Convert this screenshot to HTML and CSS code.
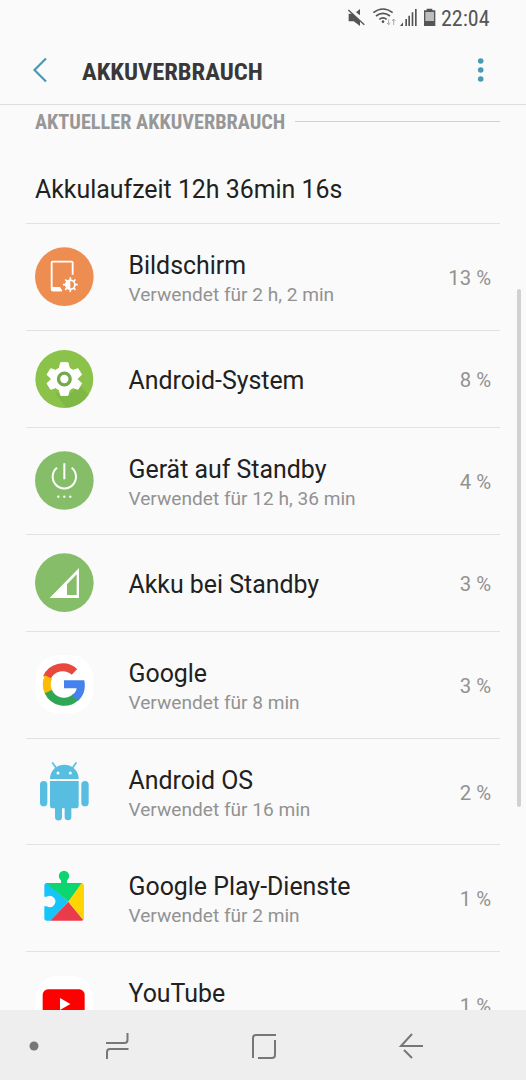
FILE: index.html
```html
<!DOCTYPE html>
<html lang="de">
<head>
<meta charset="utf-8">
<title>Akkuverbrauch</title>
<link rel="stylesheet" href="styles.css">
</head>
<body>
<div class="screen">
  <header class="status">
    <svg class="status-icons" width="104" height="28" viewBox="0 0 312 84">
      <g fill="#555"><path d="M14 41h12l22 22v15L29 64H14zM48 27v19L36 37z"/><path d="M13 30l48 44" stroke="#555" stroke-width="4"/></g>
      <g fill="none" stroke="#555" stroke-width="5"><path d="M88 38q29-22 58 0M96 48q21-16 42 0M106 58q11-9 22 0"/></g>
      <circle cx="117" cy="65" r="4" fill="#555"/>
      <path d="M134 58v16m-5-5l5 5 5-5M149 75V57m-5 6l5-6 5 6" fill="none" stroke="#aaa" stroke-width="3"/>
      <path d="M168 78l9-11v11zM184 57h5v21h-5zM193 47h5v31h-5zM203 37h5v41h-5zM213 27h5v51h-5z" fill="#555"/>
      <path d="M240 31h8v-5h17v5h9v47h-34z" fill="#555"/><path d="M244 36h26v27h-26z" fill="#bdbdbd"/>
    </svg>
    <span class="clock">22:04</span>
  </header>
  <div class="toolbar">
    <svg class="back" width="16" height="26" viewBox="0 0 16 26"><path d="M14 1.500L2.500 13 14 24.500" fill="none" stroke="#4b9ab5" stroke-width="2.200"/></svg>
    <h1 class="title">AKKUVERBRAUCH</h1>
    <svg class="more" width="8" height="26" viewBox="0 0 8 26" fill="#4b9ab5"><circle cx="3.700" cy="4" r="2.800"/><circle cx="3.700" cy="13" r="2.800"/><circle cx="3.700" cy="22" r="2.800"/></svg>
  </div>
  <main class="content">
    <div class="section"><h2 class="section-title">AKTUELLER AKKUVERBRAUCH</h2><i class="rule"></i></div>
    <div class="summary"><span class="name">Akkulaufzeit 12h 36min 16s</span></div>
    <ul class="list">
      <li class="row">
        <svg class="icon" viewBox="0 3 240 240"><circle cx="121" cy="122" r="88" fill="#ee8d51"/><path d="M146 116V80q0-3-3-3H86q-3 0-3 3v80q0 3 3 3h28" fill="none" stroke="#fff" stroke-width="5.500"/><path d="M83 153h25l7 13H83z" fill="#fff"/><g stroke="#fff" stroke-width="5"><path d="M139 124v44M117 146h44M123.500 130.500l31 31M123.500 161.500l31-31"/></g><circle cx="139" cy="146" r="16" fill="#fff"/><path d="M139 135a11 11 0 0 1 0 22z" fill="#ee8d51"/></svg>
        <div class="text"><span class="name">Bildschirm</span><span class="sub">Verwendet für 2 h, 2 min</span></div><span class="pct">13 %</span>
      </li>
      <li class="row single">
        <svg class="icon" viewBox="0 -3 240 240"><circle cx="121" cy="117" r="87" fill="#8bc34a"/><path d="M93 158l33 45a87 87 0 0 0 68-39l-30-31-20 25z" fill="#76ad42" opacity=".5"/><path d="M110 68h22l4 16 11 7 15-5 11 18-12 11v4l12 11-11 18-15-5-11 7-4 16h-22l-4-16-11-7-15 5-11-18 12-11v-4l-12-11 11-18 15 5 11-7z" fill="#fff" stroke="#fff" stroke-width="3" stroke-linejoin="round"/><circle cx="121" cy="117" r="17.500" fill="#fff" stroke="#75a84b" stroke-width="10"/></svg>
        <div class="text"><span class="name">Android-System</span></div><span class="pct">8 %</span>
      </li>
      <li class="row">
        <svg class="icon" viewBox="0 3 240 240"><circle cx="121" cy="121.500" r="88" fill="#86bd69"/><path d="M121 70v48M99 83a35 35 0 1 0 44 0" fill="none" stroke="#fff" stroke-width="6"/><g fill="#fff"><circle cx="103" cy="170" r="3.500"/><circle cx="121" cy="170" r="3.500"/><circle cx="139" cy="170" r="3.500"/></g></svg>
        <div class="text"><span class="name">Gerät auf Standby</span><span class="sub">Verwendet für 12 h, 36 min</span></div><span class="pct">4 %</span>
      </li>
      <li class="row single">
        <svg class="icon" viewBox="0 -3 240 240"><circle cx="121" cy="116" r="88" fill="#86bd69"/><path d="M165 72v90H77zM158 91l-29 30v32h29z" fill="#fff" fill-rule="evenodd"/></svg>
        <div class="text"><span class="name">Akku bei Standby</span></div><span class="pct">3 %</span>
      </li>
      <li class="row">
        <svg class="icon" viewBox="0 3 240 240"><rect x="34" y="34" width="174" height="174" rx="68" fill="#fff"/><g fill="none" stroke-width="24"><path d="M68.500 101a52 52 0 0 1 83-17.500" stroke="#e8483d"/><path d="M73.500 144a52 52 0 0 1 0-45" stroke="#fbbc05"/><path d="M155 160a52 52 0 0 1-82-17" stroke="#2fa653"/></g><path d="M120 109h61c5 27-3 48-18 61l-20-16c9-6 13-11 15-21h-38z" fill="#4682ed"/></svg>
        <div class="text"><span class="name">Google</span><span class="sub">Verwendet für 8 min</span></div><span class="pct">3 %</span>
      </li>
      <li class="row short">
        <svg class="icon" viewBox="0 5 240 240" fill="#58bee1"><path d="M78 86a43 43 0 0 1 86 0zM78 92h86v75q0 7-7 7h-15v26a10 10 0 0 1-20 0v-26h-8v26a10 10 0 0 1-21 0v-26h-8q-7 0-7-7z"/><rect x="48" y="92" width="22" height="76" rx="11"/><rect x="172" y="92" width="22" height="76" rx="11"/><path d="M95 51l-9-13M147 51l9-13" stroke="#58bee1" stroke-width="5" stroke-linecap="round"/><circle cx="102" cy="68" r="4.500" fill="#fff"/><circle cx="139" cy="68" r="4.500" fill="#fff"/></svg>
        <div class="text"><span class="name">Android OS</span><span class="sub">Verwendet für 16 min</span></div><span class="pct">2 %</span>
      </li>
      <li class="row">
        <svg class="icon" viewBox="0 -6 240 240"><circle cx="120" cy="48" r="15.500" fill="#0bd66f"/><path d="M111 52h18v18h-18z" fill="#0bd66f"/><path d="M78 182l55-57 45 55q-2 2-6 2z" fill="#ea3b4b"/><path d="M69 69l64 56-54 57H69q-8 0-8-8v-35h7a17 17 0 1 0 0-29h-7V77q0-8 8-8z" fill="#16c4f7"/><path d="M66 69h109l-42 56z" fill="#0bd66f"/><path d="M173 69l-40 56 45 55q2-2 2-6V77q0-7-7-8z" fill="#ffd400"/></svg>
        <div class="text"><span class="name">Google Play-Dienste</span><span class="sub">Verwendet für 2 min</span></div><span class="pct">1 %</span>
      </li>
      <li class="row">
        <svg class="icon" viewBox="0 -15 240 240"><rect x="34" y="17" width="174" height="174" rx="68" fill="#fff"/><rect x="56" y="58" width="126" height="88" rx="16" fill="#f00"/><path d="M108 84l31 18-31 18z" fill="#fff"/></svg>
        <div class="text partial"><span class="name">YouTube</span></div><span class="pct">1 %</span>
      </li>
    </ul>
  </main>
  <nav class="nav">
    <svg width="526" height="70" viewBox="0 0 526 70" fill="none" stroke="#777" stroke-width="2">
      <circle cx="34" cy="36" r="4.500" fill="#777" stroke="none"/>
      <path d="M106 33h18.500q3 0 3-3v-7M128.500 39H110q-3 0-3 3v7"/>
      <path d="M253 48V28q0-3 3-3h20M275 30v15q0 3-3 3h-14"/>
      <path d="M423 36h-22l11-12M404 40l8 8"/>
    </svg>
  </nav>
  <i class="scrollbar"></i>
</div>
</body>
</html>
```
FILE: styles.css
```css
* { box-sizing: border-box; margin: 0; padding: 0; }
body { background: #fafafa; font-family: Roboto, sans-serif; color: #212121; }
.screen { position: relative; width: 526px; height: 1080px; display: flex; flex-direction: column; overflow: hidden; }
.status { height: 36px; flex: none; display: flex; padding-left: 344px; }
.status-icons { flex: none; }
.clock { margin-left: -7px; font-family: "Roboto Condensed", Roboto, sans-serif; font-stretch: 75%; font-size: 22px; line-height: 37px; color: #555; }
.toolbar { height: 69px; flex: none; display: flex; align-items: center; padding: 0 41px 0 32px; border-bottom: 1px solid #dedede; }
.title { flex: 1; margin-left: 34px; padding-top: 3px; font: 700 24.6px/30px "Roboto Condensed", Roboto, sans-serif; font-stretch: 75%; color: #383838; white-space: nowrap; }
.content { flex: 1; min-height: 0; overflow: hidden; padding: 0 26px; }
.section { display: flex; align-items: center; height: 34px; padding-left: 9px; }
.section-title { font: 700 20.3px/24px "Roboto Condensed", Roboto, sans-serif; font-stretch: 75%; color: #979797; white-space: nowrap; }
.rule { flex: 1; height: 1px; background: #d2d2d2; margin: 0 0 2px 10px; }
.summary { height: 85px; padding: 35px 9px 0; border-bottom: 1px solid #e2e2e2; }
.name { display: block; font-size: 24.9px; line-height: 32px; white-space: nowrap; }
.list { list-style: none; }
.row { height: 107px; display: flex; align-items: center; border-bottom: 1px solid #e2e2e2; padding-right: 9px; }
.single { height: 97px; }
.short { height: 106px; }
.icon { width: 80px; height: 80px; flex: none; margin-left: -2px; }
.text { flex: 1; margin-left: 24.5px; padding-top: 4px; }
.partial { padding-bottom: 26px; }
.sub { display: block; font-size: 19.1px; line-height: 26px; color: #929292; white-space: nowrap; }
.pct { padding-top: 2px; font-size: 20.3px; color: #929292; }
.nav { height: 70px; flex: none; background: #eee; }
.nav svg { display: block; }
.scrollbar { position: absolute; right: 5px; top: 289px; width: 4px; height: 518px; border-radius: 2px; background: #d1d1d1; }
```
